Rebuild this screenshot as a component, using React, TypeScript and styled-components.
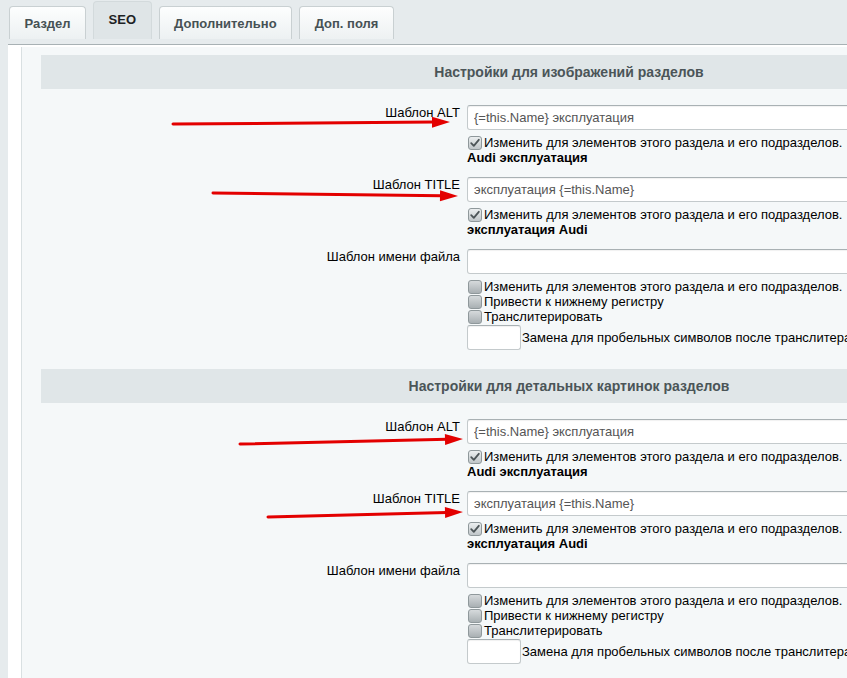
import * as React from 'react';
import styled, { createGlobalStyle } from 'styled-components';

const GlobalStyle = createGlobalStyle`
  html, body {
    margin: 0;
    padding: 0;
    height: 100%;
    overflow: hidden;
  }
  body {
    background: #e6ebed;
    font-family: Arial, "Liberation Sans", sans-serif;
    font-size: 13px;
    color: #000;
  }
`;

interface IFieldRow {
  label: string;
  value: string;
  hint: string;
}

interface ISection {
  title: string;
  rows: IFieldRow[];
}

const sections: ISection[] = [
  {
    title: 'Настройки для изображений разделов',
    rows: [
      { label: 'Шаблон ALT', value: '{=this.Name} эксплуатация', hint: 'Audi эксплуатация' },
      { label: 'Шаблон TITLE', value: 'эксплуатация {=this.Name}', hint: 'эксплуатация Audi' },
    ],
  },
  {
    title: 'Настройки для детальных картинок разделов',
    rows: [
      { label: 'Шаблон ALT', value: '{=this.Name} эксплуатация', hint: 'Audi эксплуатация' },
      { label: 'Шаблон TITLE', value: 'эксплуатация {=this.Name}', hint: 'эксплуатация Audi' },
    ],
  },
];

const tabs = ['Раздел', 'SEO', 'Дополнительно', 'Доп. поля'];

const arrows = [
  { x1: 173, y1: 124, x2: 450, y2: 122 },
  { x1: 213, y1: 193, x2: 458, y2: 196 },
  { x1: 240, y1: 444, x2: 463, y2: 439 },
  { x1: 268, y1: 517, x2: 463, y2: 512 },
];

const CheckBox = ({ checked }: { checked?: boolean }) => (
  <Box $checked={checked}>
    {checked && (
      <svg width="12" height="12" viewBox="0 0 12 12">
        <path d="M2.2 6.2 L4.8 8.8 L9.8 2.8" fill="none" stroke="#4d5558" strokeWidth="1.8" strokeLinecap="round" strokeLinejoin="round" />
      </svg>
    )}
  </Box>
);

const Arrow = ({ x1, y1, x2, y2 }: { x1: number; y1: number; x2: number; y2: number }) => {
  const len = Math.hypot(x2 - x1, y2 - y1);
  const ux = (x2 - x1) / len;
  const uy = (y2 - y1) / len;
  const bx = x2 - ux * 18;
  const by = y2 - uy * 18;
  const px = -uy * 5.5;
  const py = ux * 5.5;
  return (
    <g>
      <line x1={x1} y1={y1} x2={bx + ux * 2} y2={by + uy * 2} stroke="#e30000" strokeWidth="3" strokeLinecap="round" />
      <polygon points={`${x2},${y2} ${bx + px},${by + py} ${bx - px},${by - py}`} fill="#e30000" />
    </g>
  );
};

export default function App() {
  return (
    <Page>
      <GlobalStyle />
      <TabBar>
        {tabs.map((t) => (
          <Tab key={t} $active={t === 'SEO'}>{t}</Tab>
        ))}
      </TabBar>
      <Panel>
        <Inner>
          {sections.map((s) => (
            <Section key={s.title}>
              <Header>{s.title}</Header>
              {s.rows.map((r) => (
                <Row key={r.label}>
                  <Label>{r.label}</Label>
                  <Field>
                    <TextInput defaultValue={r.value} />
                    <CheckLine>
                      <CheckBox checked />
                      Изменить для элементов этого раздела и его подразделов.
                    </CheckLine>
                    <Hint>{r.hint}</Hint>
                  </Field>
                </Row>
              ))}
              <Row>
                <Label>Шаблон имени файла</Label>
                <Field>
                  <TextInput defaultValue="" />
                  <CheckLine>
                    <CheckBox />
                    Изменить для элементов этого раздела и его подразделов.
                  </CheckLine>
                  <CheckLine>
                    <CheckBox />
                    Привести к нижнему регистру
                  </CheckLine>
                  <CheckLine>
                    <CheckBox />
                    Транслитерировать
                  </CheckLine>
                  <ReplaceLine>
                    <SmallInput defaultValue="" />
                    <ReplaceText>Замена для пробельных символов после транслитерации</ReplaceText>
                  </ReplaceLine>
                </Field>
              </Row>
            </Section>
          ))}
        </Inner>
      </Panel>
      <Overlay width="847" height="678" viewBox="0 0 847 678">
        {arrows.map((a, i) => (
          <Arrow key={i} {...a} />
        ))}
      </Overlay>
    </Page>
  );
}

const Page = styled.div`
  position: relative;
  width: 1200px;
  padding-left: 8px;
`;

const TabBar = styled.div`
  display: flex;
  align-items: flex-end;
  gap: 7px;
  height: 39px;
  padding-left: 1px;
`;

const Tab = styled.div<{ $active?: boolean }>`
  box-sizing: border-box;
  display: flex;
  align-items: center;
  height: ${(p) => (p.$active ? '38px' : '33px')};
  padding: ${(p) => (p.$active ? '0 14.5px 3px' : '0 14.5px')};
  border: 1px solid ${(p) => (p.$active ? '#d3dadc' : '#c9d0d2')};
  border-bottom: none;
  border-radius: 4px 4px 0 0;
  background: ${(p) => (p.$active ? '#dfe5e7' : 'linear-gradient(#fdfefe, #edf1f2)')};
  font-weight: bold;
  font-size: 13px;
  color: ${(p) => (p.$active ? '#1d2224' : '#465154')};
`;

const Panel = styled.div`
  margin-top: 5px;
  border-top: 1px solid #a8b1b4;
  background: #fff;
  padding: 2px 0 0 13px;
`;

const Inner = styled.div`
  display: flex;
  flex-direction: column;
  gap: 13px;
  border-left: 1px solid #d9e0e2;
  background: #f5f8f9;
  padding: 8px 0 40px 19px;
`;

const Section = styled.div`
  width: 1056px;
  display: flex;
  flex-direction: column;
`;

const Header = styled.div`
  height: 34px;
  display: flex;
  align-items: center;
  justify-content: center;
  background: #e0e6e8;
  font-weight: bold;
  font-size: 14px;
  color: #4b5558;
  margin-bottom: 10px;
`;

const Row = styled.div`
  display: flex;
  padding: 6px 0;
`;

const Label = styled.div`
  flex-shrink: 0;
  width: 419px;
  padding-right: 7px;
  text-align: right;
  line-height: 15px;
  color: #000;
`;

const Field = styled.div`
  display: flex;
  flex-direction: column;
  align-items: flex-start;
`;

const TextInput = styled.input`
  box-sizing: border-box;
  width: 600px;
  height: 25px;
  margin: 0 0 5px 0;
  padding: 0 6px;
  border: 1px solid #c4cacc;
  border-top-color: #a9b1b4;
  border-radius: 3px;
  background: #fff;
  box-shadow: inset 0 1px 1px rgba(0, 0, 0, 0.06);
  font-family: Arial, "Liberation Sans", sans-serif;
  font-size: 13px;
  color: #555;
  outline: none;
`;

const CheckLine = styled.div`
  display: flex;
  align-items: center;
  height: 15px;
  line-height: 15px;
  white-space: nowrap;
`;

const Box = styled.span<{ $checked?: boolean }>`
  box-sizing: border-box;
  display: inline-flex;
  align-items: center;
  justify-content: center;
  width: 14px;
  height: 14px;
  margin: 0 2px 0 1px;
  border: 1px solid #8f989b;
  border-radius: 3px;
  background: ${(p) => (p.$checked ? 'linear-gradient(#eceff0, #c0c6c9)' : 'linear-gradient(#d6dadc, #a9b0b3)')};
`;

const Hint = styled.div`
  font-weight: bold;
  line-height: 15px;
  white-space: nowrap;
`;

const ReplaceLine = styled.div`
  display: flex;
  align-items: center;
  margin-top: 1px;
  white-space: nowrap;
`;

const SmallInput = styled(TextInput)`
  width: 54px;
  margin: 0;
`;

const ReplaceText = styled.span`
  margin-left: 1px;
`;

const Overlay = styled.svg`
  position: absolute;
  top: 0;
  left: 0;
  pointer-events: none;
`;
